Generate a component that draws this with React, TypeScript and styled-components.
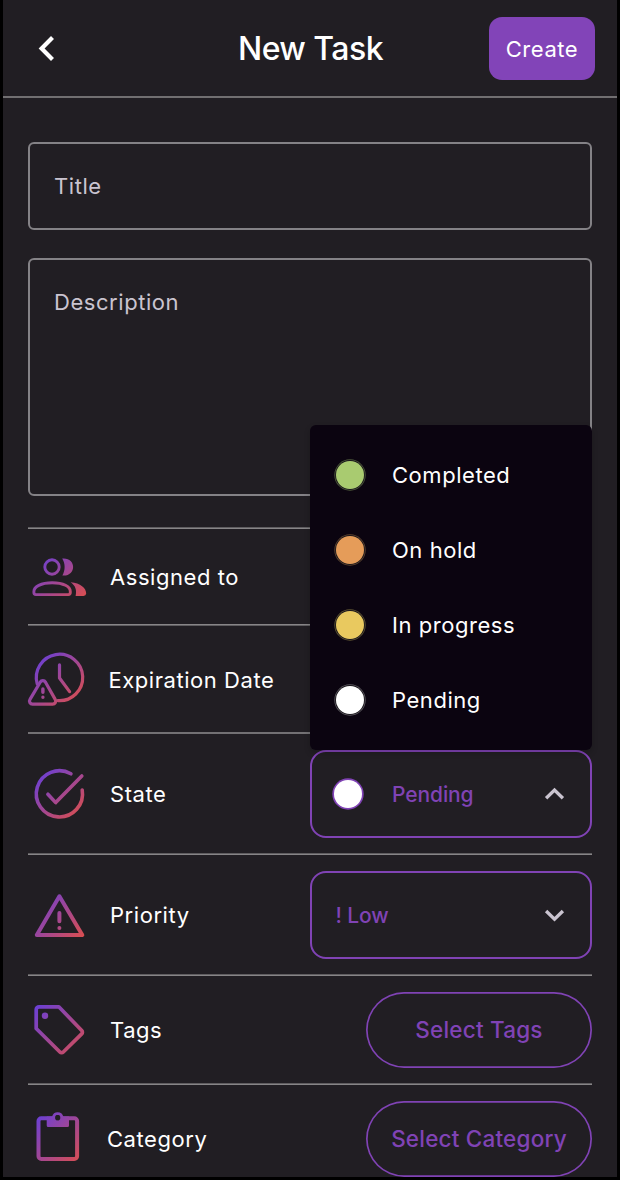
import React from "react";
import styled, { createGlobalStyle } from "styled-components";

const accent = "#8043b5";

const GlobalStyle = createGlobalStyle`
  *, *::before, *::after { box-sizing: border-box; }
  html, body { margin: 0; background: #000; }
  body { overflow: hidden; }
  button { font: inherit; margin: 0; padding: 0; cursor: pointer; }
`;

const Screen = styled.main`
  width: 614px;
  height: 1177px;
  margin: 0 auto;
  overflow: hidden;
  background: #211e23;
  color: #fff;
  font-family: Inter, "Liberation Sans", sans-serif;
  font-size: 22px;
  letter-spacing: 0.55px;
  line-height: 28px;
`;

const Header = styled.header`
  display: grid;
  grid-template-columns: 106px 1fr 106px;
  align-items: center;
  height: 98px;
  padding: 0 22px 0 25px;
  border-bottom: 2px solid #716f71;
`;

const BackButton = styled.button`
  display: flex;
  width: 40px;
  height: 40px;
  border: 0;
  background: none;
`;

const Heading = styled.h1`
  margin: 0;
  padding: 2px 2px 0 0;
  text-align: center;
  font-size: 32px;
  font-weight: 500;
  letter-spacing: -0.55px;
  line-height: 40px;
`;

const CreateButton = styled.button`
  height: 63px;
  padding-top: 1px;
  border: 0;
  border-radius: 13px;
  background: #8244b8;
  color: #fff;
  letter-spacing: inherit;
`;

const Form = styled.div`
  padding: 44px 25px 0;
`;

const fieldHeights = { single: 88, multi: 238 };

const Field = styled.div<{ $size: keyof typeof fieldHeights }>`
  height: ${(p) => fieldHeights[p.$size]}px;
  margin-bottom: ${(p) => (p.$size === "single" ? 28 : 31)}px;
  padding: 28px 24px;
  border: 2px solid #848286;
  border-radius: 6px;
  color: #cac4d0;
`;

const Divider = styled.hr<{ $top: string; $bottom: string }>`
  height: 2px;
  margin: 0;
  border: 0;
  background: linear-gradient(${(p) => p.$top} 50%, ${(p) => p.$bottom} 50%);
`;

const Row = styled.div<{ $height: number }>`
  display: flex;
  align-items: center;
  height: ${(p) => p.$height}px;
`;

const RowIcon = styled.svg`
  flex: none;
  width: 60px;
  height: 60px;
  overflow: visible;
`;

const RowLabel = styled.span<{ $gap: number; $drop?: number }>`
  flex: 1;
  padding-top: ${(p) => p.$drop ?? 0}px;
  padding-left: ${(p) => p.$gap}px;
`;

const SelectWrap = styled.div`
  position: relative;
  width: 282px;
`;

const SelectBox = styled.button<{ $inset: number }>`
  display: flex;
  align-items: center;
  width: 100%;
  height: 88px;
  padding: 0 23px 0 ${(p) => p.$inset}px;
  border: 2px solid ${accent};
  border-radius: 16px;
  background: transparent;
  color: ${accent};
  font-size: 21px;
  font-weight: 500;
  letter-spacing: -0.1px;
  text-align: left;
`;

const SelectValue = styled.span`
  flex: 1;
  padding-top: 2px;
`;

const Menu = styled.ul`
  position: absolute;
  z-index: 1;
  left: 0;
  right: 0;
  bottom: 88px;
  margin: 0;
  padding: 13px 0 12px;
  list-style: none;
  border-radius: 6px;
  background: #0b0410;
  box-shadow: 0 3px 6px rgba(0, 0, 0, 0.2);
`;

const MenuItem = styled.li`
  display: flex;
  align-items: center;
  height: 75px;
  padding-left: 26px;
`;

const Dot = styled.i<{ $color: string; $inner: string; $ring: string; $gap: number }>`
  flex: none;
  width: 28px;
  height: 28px;
  margin-right: ${(p) => p.$gap}px;
  border-radius: 50%;
  background: ${(p) => p.$color};
  box-shadow: 0 0 0 0.9px ${(p) => p.$inner}, 0 0 0 1.7px ${(p) => p.$ring};
`;

const PillButton = styled.button`
  width: 226px;
  height: 76px;
  border: 0;
  border-radius: 38px;
  box-shadow: inset 0 0 0 1.7px ${accent};
  background: transparent;
  color: ${accent};
  font-size: 22.5px;
  font-weight: 500;
  letter-spacing: 0.2px;
`;

const states = [
  { name: "Completed", color: "#a9cb70", ring: "#4e5a3c" },
  { name: "On hold", color: "#e59c59", ring: "#5f452f" },
  { name: "In progress", color: "#e9c95f", ring: "#5f5533" },
  { name: "Pending", color: "#ffffff", ring: "#5e5b61" },
];

const bright = "#878587";
const medium = "#737174";
const dim = "#5f5d60";

type IconProps = {
  id: string;
  box: [number, number, number, number];
  children: (paint: string) => React.ReactNode;
};

function GradientIcon({ id, box, children }: IconProps) {
  return (
    <RowIcon viewBox="0 0 60 60" fill="none" strokeLinecap="round" strokeLinejoin="round">
      <defs>
        <linearGradient id={id} gradientUnits="userSpaceOnUse" x1={box[0]} y1={box[1]} x2={box[2]} y2={box[3]}>
          <stop offset="0" stopColor="#6a3fd6" />
          <stop offset="1" stopColor="#d84e52" />
        </linearGradient>
      </defs>
      {children(`url(#${id})`)}
    </RowIcon>
  );
}

const PeopleIcon = () => (
  <GradientIcon id="people" box={[12, 9, 54, 52]}>
    {(g) => (
      <>
        <circle cx="24" cy="20" r="7.2" stroke={g} strokeWidth="2.9" />
        <path d="M5.9 44.5C5.9 39.8 12.8 35.7 24.2 35.7S42.3 39.8 42.3 44.5V45.6a2 2 0 0 1-2 2H7.9a2 2 0 0 1-2-2Z" stroke={g} strokeWidth="2.9" />
        <path d="M34.2 11.6C41 10.8 45.1 15 45.1 20S41 29.2 34.4 28.5C37.4 23.5 37.4 16.5 34.2 11.6Z" fill={g} />
        <path d="M42.6 35.2C52.5 36 58.2 41 58.2 46.5a2.8 2.8 0 0 1-2.7 2.5H47.6C49 42.5 47.3 38.5 42.6 35.2Z" fill={g} />
      </>
    )}
  </GradientIcon>
);

const ExpirationIcon = () => (
  <GradientIcon id="expiration" box={[10, 8, 52, 50]}>
    {(g) => (
      <g stroke={g} strokeWidth="3.2">
        <path d="M9.2 34.8A23.2 23.2 0 1 1 30 51.6" />
        <path d="M31.5 15.9V29L41.6 42.6" />
        <path d="M12.2 33.2a3.1 3.1 0 0 1 5.3 0L27.2 50.4a3.1 3.1 0 0 1-2.7 4.8H4.7a3.1 3.1 0 0 1-2.7-4.8Z" />
        <path d="M14.9 39.9V43.3M14.9 48.3v.05" strokeWidth="3.4" />
      </g>
    )}
  </GradientIcon>
);

const StateIcon = () => (
  <GradientIcon id="state" box={[11, 9, 52, 51]}>
    {(g) => (
      <g stroke={g} strokeWidth="3.6">
        <path d="M54.2 26A23.1 23.1 0 1 1 42.9 9.8" />
        <path d="M19.9 30.2L27.7 38.6L53.8 12" />
      </g>
    )}
  </GradientIcon>
);

const PriorityIcon = () => (
  <GradientIcon id="priority" box={[8, 10, 55, 51]}>
    {(g) => (
      <g stroke={g} strokeWidth="4">
        <path d="M31.4 11.3L54.3 50H8.8Z" />
        <path d="M31.4 28V36.2M31.4 43v.05" />
      </g>
    )}
  </GradientIcon>
);

const TagIcon = () => (
  <GradientIcon id="tag" box={[7, 6, 57, 54]}>
    {(g) => (
      <>
        <path d="M8.2 9.8a3 3 0 0 1 3-3H30.8L53.7 30.5a2.4 2.4 0 0 1 0 3.4L35.3 52a2.4 2.4 0 0 1-3.4 0L8.2 28.5Z" stroke={g} strokeWidth="3.7" />
        <circle cx="17" cy="15.8" r="3.2" fill={g} />
      </>
    )}
  </GradientIcon>
);

const CategoryIcon = () => (
  <GradientIcon id="category" box={[8, 8, 52, 52]}>
    {(g) => (
      <>
        <rect x="10.5" y="9.3" width="38.6" height="40.7" rx="2.8" stroke={g} strokeWidth="4" />
        <path
          fill={g}
          fillRule="evenodd"
          d="M18.7 7.5H24.1a5.8 5.8 0 0 1 11.2 0H41V16.6a1.5 1.5 0 0 1-1.5 1.5H20.2a1.5 1.5 0 0 1-1.5-1.5ZM29.7 6.1a2.6 2.6 0 1 0 0 5.2a2.6 2.6 0 1 0 0-5.2Z"
        />
        <circle cx="29.7" cy="8.7" r="2.6" fill="#211e23" />
      </>
    )}
  </GradientIcon>
);

const Caret = ({ up = false }: { up?: boolean }) => (
  <svg width="26" height="20" viewBox="0 0 26 20" fill="none" stroke="#cac4d0" strokeWidth="3.3">
    <path d={up ? "M5.1 14.2L13.5 6L21.9 14.2" : "M5.1 6L13.5 14.2L21.9 6"} />
  </svg>
);

export default function App() {
  return (
    <>
      <GlobalStyle />
      <Screen>
        <Header>
          <BackButton aria-label="Back">
            <svg width="40" height="40" viewBox="0 0 40 40" fill="none" stroke="#fff" strokeWidth="4.2">
              <path d="M24.5 9.5L13.6 20.5L24.5 31.5" />
            </svg>
          </BackButton>
          <Heading>New Task</Heading>
          <CreateButton>Create</CreateButton>
        </Header>
        <Form>
          <Field $size="single">Title</Field>
          <Field $size="multi">Description</Field>
          <Divider $top={dim} $bottom={bright} />
          <Row $height={95}>
            <PeopleIcon />
            <RowLabel $gap={22}>Assigned to</RowLabel>
          </Row>
          <Divider $top={bright} $bottom={dim} />
          <Row $height={106}>
            <ExpirationIcon />
            <RowLabel $gap={20.5} $drop={1}>Expiration Date</RowLabel>
          </Row>
          <Divider $top={medium} $bottom={medium} />
          <Row $height={119}>
            <StateIcon />
            <RowLabel $gap={22}>State</RowLabel>
            <SelectWrap>
              <Menu>
                {states.map((s) => (
                  <MenuItem key={s.name}>
                    <Dot $color={s.color} $inner="#1a161c" $ring={s.ring} $gap={28} />
                    {s.name}
                  </MenuItem>
                ))}
              </Menu>
              <SelectBox $inset={21.5}>
                <Dot $color="#fff" $inner={accent} $ring={accent} $gap={30.5} />
                <SelectValue>Pending</SelectValue>
                <Caret up />
              </SelectBox>
            </SelectWrap>
          </Row>
          <Divider $top={dim} $bottom={bright} />
          <Row $height={119}>
            <PriorityIcon />
            <RowLabel $gap={22} $drop={1}>Priority</RowLabel>
            <SelectWrap>
              <SelectBox $inset={23.5}>
                <SelectValue>! Low</SelectValue>
                <Caret />
              </SelectBox>
            </SelectWrap>
          </Row>
          <Divider $top={dim} $bottom={bright} />
          <Row $height={107}>
            <TagIcon />
            <RowLabel $gap={22}>Tags</RowLabel>
            <PillButton>Select Tags</PillButton>
          </Row>
          <Divider $top={dim} $bottom={bright} />
          <Row $height={107}>
            <CategoryIcon />
            <RowLabel $gap={19}>Category</RowLabel>
            <PillButton>Select Category</PillButton>
          </Row>
        </Form>
      </Screen>
    </>
  );
}
